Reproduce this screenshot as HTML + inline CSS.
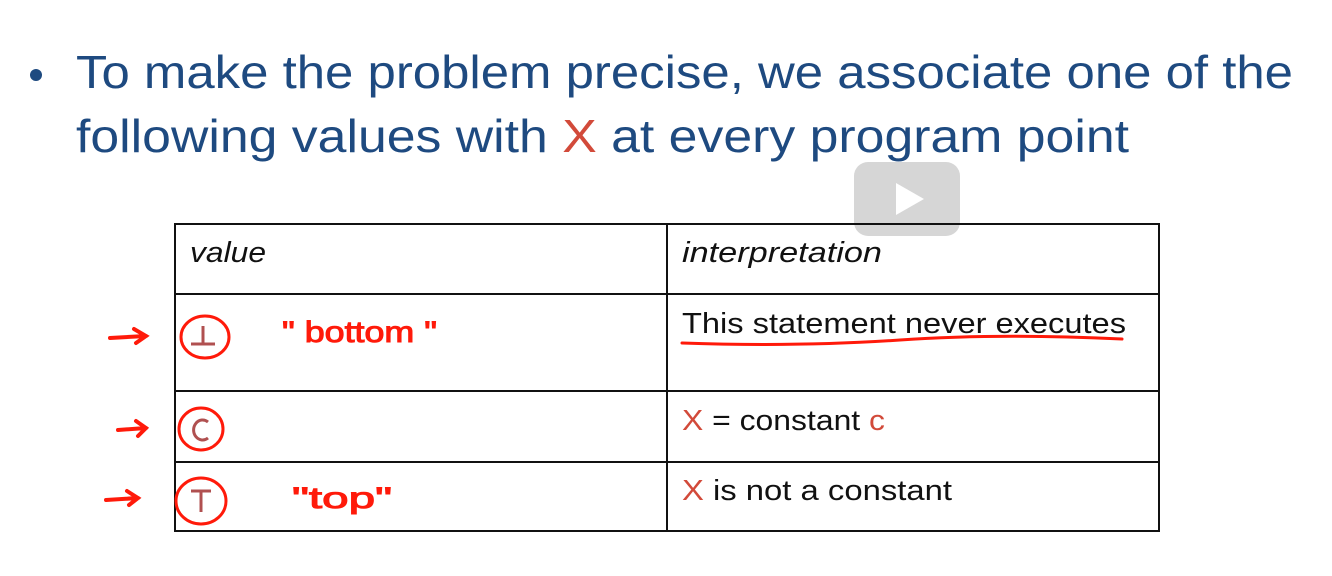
<!DOCTYPE html>
<html><head><style>html,body{margin:0;padding:0;background:#fff;width:1332px;height:576px;overflow:hidden}</style></head>
<body>
<svg width="1332" height="576" xmlns="http://www.w3.org/2000/svg" font-family="Liberation Sans, sans-serif">
<rect width="1332" height="576" fill="#fff"/>
<circle cx="36" cy="75" r="6" fill="#1e4a80"/>
<text x="76" y="88" font-size="46" fill="#1e4a80" textLength="1217" lengthAdjust="spacingAndGlyphs">To make the problem precise, we associate one of the</text>
<text x="76" y="152" font-size="46" fill="#1e4a80" textLength="1053" lengthAdjust="spacingAndGlyphs">following values with <tspan fill="#d24a3a">X</tspan> at every program point</text>
<rect x="854" y="162" width="106" height="74" rx="14" fill="#c8c8c8" opacity="0.75"/>
<polygon points="896,183 896,215 924,199" fill="#fff"/>
<g stroke="#111" stroke-width="2" fill="none">
<rect x="175" y="224" width="984" height="307"/>
<line x1="667" y1="224" x2="667" y2="531"/>
<line x1="175" y1="294" x2="1159" y2="294"/>
<line x1="175" y1="391" x2="1159" y2="391"/>
<line x1="175" y1="462" x2="1159" y2="462"/>
</g>
<g font-size="29" fill="#111">
<text x="190" y="262" font-style="italic" textLength="76" lengthAdjust="spacingAndGlyphs">value</text>
<text x="682" y="262" font-style="italic" textLength="200" lengthAdjust="spacingAndGlyphs">interpretation</text>
<text x="682" y="333" textLength="444" lengthAdjust="spacingAndGlyphs">This statement never executes</text>
<text x="682" y="430" textLength="203" lengthAdjust="spacingAndGlyphs"><tspan fill="#d24a3a">X</tspan> = constant <tspan fill="#d24a3a">c</tspan></text>
<text x="682" y="500" textLength="270" lengthAdjust="spacingAndGlyphs"><tspan fill="#d24a3a">X</tspan> is not a constant</text>
</g>
<g stroke="#ff1a0a" stroke-width="3" fill="none" stroke-linecap="round">
<path d="M682 343 Q800 347 900 340 T1122 339"/>
</g>
<g stroke="#ff1a0a" stroke-width="4" fill="none" stroke-linecap="round">
<path d="M110 338 L146 336 M134 329 L146 336 L136 343"/>
<path d="M118 430 L146 428 M136 421 L146 428 L138 436"/>
<path d="M106 500 L138 498 M127 491 L138 498 L129 505"/>
</g>
<g stroke="#ff1a0a" stroke-width="3" fill="none">
<ellipse cx="205" cy="337" rx="24" ry="21"/>
<ellipse cx="201" cy="429" rx="22" ry="21"/>
<ellipse cx="201" cy="501" rx="25" ry="23"/>
</g>
<g stroke="#b05050" stroke-width="3" fill="none">
<path d="M191 344 L215 344 M203 326 L203 344"/>
<path d="M208 422 A9 10 0 1 0 208 438"/>
<path d="M191 491 L211 491 M201 491 L201 512"/>
</g>
<g font-size="30" fill="#ff1a0a" font-family="Liberation Sans, sans-serif">
<text x="282" y="342" textLength="155" lengthAdjust="spacingAndGlyphs" stroke="#ff1a0a" stroke-width="1">" bottom "</text>
<text x="292" y="508" textLength="100" lengthAdjust="spacingAndGlyphs" stroke="#ff1a0a" stroke-width="1">"top"</text>
</g>
</svg>
</body></html>
